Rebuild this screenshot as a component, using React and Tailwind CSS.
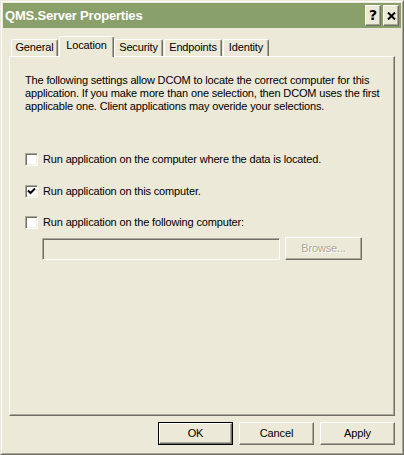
import React from "react";

function Tab({ label, selected, className }) {
  if (selected) {
    return (
      <div
        className={`relative z-10 h-[21px] mb-[-1px] flex justify-center pt-[2px] bg-[#ece9d8] border-t border-l border-t-white border-l-white border-r border-r-[#716f64] shadow-[inset_-1px_0_0_#aca899] rounded-t-[2px] ${className}`}
      >
        {label}
      </div>
    );
  }
  return (
    <div
      className={`h-[17px] flex justify-center pt-[1px] bg-[#ece9d8] border-t border-l border-t-white border-l-white border-r border-r-[#716f64] shadow-[inset_-1px_0_0_#aca899] rounded-t-[2px] ${className}`}
    >
      {label}
    </div>
  );
}

function CheckBox({ checked }) {
  return (
    <div className="w-[13px] h-[13px] shrink-0 bg-white border border-t-[#aca899] border-l-[#aca899] border-r-white border-b-white shadow-[inset_1px_1px_0_#716f64,inset_-1px_-1px_0_#f1efe2] flex items-center justify-center">
      {checked && (
        <svg width="9" height="9" viewBox="0 0 9 9">
          <path d="M1 3.5 L3.5 6 L8 1.5" fill="none" stroke="#000" strokeWidth="2" strokeLinecap="butt" />
        </svg>
      )}
    </div>
  );
}

function Button({ label, isDefault, disabled, className }) {
  const base =
    "h-[23px] w-[75px] flex items-center justify-center bg-[#ece9d8]";
  if (isDefault) {
    return (
      <div className={`${base} border border-black p-0 ${className}`}>
        <div className="w-full h-full flex items-center justify-center border border-t-white border-l-white border-r-[#716f64] border-b-[#716f64] shadow-[inset_-1px_-1px_0_#aca899]">
          {label}
        </div>
      </div>
    );
  }
  return (
    <div
      className={`${base} border border-t-white border-l-white border-r-[#716f64] border-b-[#716f64] shadow-[inset_-1px_-1px_0_#aca899] ${
        disabled ? "text-[#aca899] [text-shadow:1px_1px_0_#fff]" : ""
      } ${className}`}
    >
      {label}
    </div>
  );
}

export default function App() {
  return (
    <div className="w-[404px] h-[455px] bg-[#ece9d8] border border-t-[#ece9d8] border-l-[#ece9d8] border-r-[#716f64] border-b-[#716f64] font-['Liberation_Sans',Arial,sans-serif] text-[11px] leading-[13px] text-black tracking-[-0.15px]">
      <div className="h-full border border-t-white border-l-white border-r-[#aca899] border-b-[#aca899] p-px flex flex-col">
        {/* Title bar */}
        <div className="h-[25px] shrink-0 bg-[#8aa06b] flex items-center pl-[2px] pr-[2px]">
          <div className="flex-1 text-white font-bold text-[13px] tracking-[-0.2px] leading-none">
            QMS.Server Properties
          </div>
          <div className="w-[16px] h-[21px] bg-[#ece9d8] border border-t-white border-l-white border-r-[#716f64] border-b-[#716f64] shadow-[inset_-1px_-1px_0_#aca899] flex items-center justify-center font-bold text-[14px] font-['DejaVu_Sans',sans-serif] tracking-normal">
            ?
          </div>
          <div className="w-[16px] h-[21px] ml-[2px] bg-[#ece9d8] border border-t-white border-l-white border-r-[#716f64] border-b-[#716f64] shadow-[inset_-1px_-1px_0_#aca899] flex items-center justify-center">
            <svg width="9" height="8" viewBox="0 0 9 8">
              <path d="M1 0.5 L8 7.5 M8 0.5 L1 7.5" stroke="#000" strokeWidth="2" fill="none" />
            </svg>
          </div>
        </div>

        {/* Body */}
        <div className="flex flex-col px-[6px]">
          {/* Tabs */}
          <div className="mt-[8px] h-[20px] flex items-end pl-[2px]">
            <Tab label="General" className="w-[47px]" />
            <Tab label="Location" selected className="w-[55px] ml-[1px]" />
            <Tab label="Security" className="w-[49px]" />
            <Tab label="Endpoints" className="w-[58px] ml-[1px]" />
            <Tab label="Identity" className="w-[46px] ml-[1px]" />
          </div>

          {/* Panel */}
          <div className="h-[360px] border border-t-white border-l-white border-r-[#716f64] border-b-[#716f64] shadow-[inset_-1px_-1px_0_#aca899] pl-[15px] pt-[17px] flex flex-col">
            <p>
              The following settings allow DCOM to locate the correct computer for this
              <br />
              application. If you make more than one selection, then DCOM uses the first
              <br />
              applicable one. Client applications may overide your selections.
            </p>

            <div className="mt-[40px] flex items-center h-[13px]">
              <CheckBox />
              <span className="ml-[5px]">Run application on the computer where the data is located.</span>
            </div>
            <div className="mt-[19px] flex items-center h-[13px]">
              <CheckBox checked />
              <span className="ml-[5px]">Run application on this computer.</span>
            </div>
            <div className="mt-[18px] flex items-center h-[13px]">
              <CheckBox />
              <span className="ml-[5px]">Run application on the following computer:</span>
            </div>

            <div className="mt-[8px] flex items-center">
              <div className="ml-[17px] w-[238px] h-[22px] border border-t-[#aca899] border-l-[#aca899] border-r-white border-b-white shadow-[inset_1px_1px_0_#716f64]" />
              <Button label="Browse..." disabled className="ml-[5px] w-[77px] h-[22px]" />
            </div>
          </div>

          {/* Bottom buttons */}
          <div className="mt-[6px] flex justify-end gap-[6px]">
            <Button label="OK" isDefault />
            <Button label="Cancel" />
            <Button label="Apply" />
          </div>
        </div>
      </div>
    </div>
  );
}
